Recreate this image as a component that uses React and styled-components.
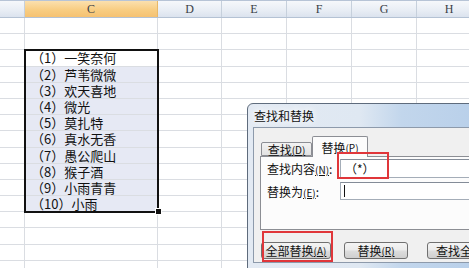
import React from "react";
import styled, { createGlobalStyle } from "styled-components";

const Global = createGlobalStyle`
  html, body { margin: 0; padding: 0; background: #fff; overflow: hidden; }
  body {
    font-family: "Noto Sans CJK SC", "Noto Sans", sans-serif;
  }
`;

const COLS = [
  { name: "", w: 25 },
  { name: "C", w: 133, active: true },
  { name: "D", w: 64 },
  { name: "E", w: 65 },
  { name: "F", w: 65 },
  { name: "G", w: 65 },
  { name: "H", w: 65 },
];

const ITEMS = [
  "（1）一笑奈何",
  "（2）芦苇微微",
  "（3）欢天喜地",
  "（4）微光",
  "（5）莫扎特",
  "（6）真水无香",
  "（7）愚公爬山",
  "（8）猴子酒",
  "（9）小雨青青",
  "（10）小雨",
];

const Sheet = styled.div`
  position: relative;
  width: 469px;
  height: 268px;
  overflow: hidden;
  background: #fff;
`;

const HeaderRow = styled.div`
  display: flex;
  height: 18px;
  box-sizing: border-box;
  border-top: 1px solid #b7c4d6;
  border-bottom: 1px solid #b4c2d4;
`;

const HeaderCell = styled.div`
  flex: 0 0 ${(p) => p.$w}px;
  box-sizing: border-box;
  border-right: 1px solid ${(p) => (p.$active ? "#e8b868" : "#c6d0dc")};
  background: ${(p) =>
    p.$active
      ? "linear-gradient(#fbe0ae, #f8cd82 55%, #f5c272)"
      : "linear-gradient(#f6f8fb, #e9eef5 55%, #dbe3ee)"};
  display: flex;
  align-items: center;
  justify-content: center;
  font-family: "Liberation Serif", "DejaVu Serif", serif;
  font-size: 12px;
  color: #3a3f47;
`;

const Row = styled.div`
  display: flex;
  height: 16.2px;
  box-sizing: border-box;
  border-bottom: 1px solid #dadde2;
`;

const Cell = styled.div`
  flex: 0 0 ${(p) => p.$w}px;
  box-sizing: border-box;
  border-right: 1px solid #dadde2;
  background: ${(p) => (p.$sel ? "#e6e9f4" : "#fff")};
  font-size: 13px;
  line-height: 15px;
  padding-left: 6px;
  color: #111;
  white-space: nowrap;
`;

const Selection = styled.div`
  position: absolute;
  left: 24px;
  top: 49px;
  width: 135px;
  height: 164px;
  box-sizing: border-box;
  border: 2px solid #111;
  pointer-events: none;
`;

const Handle = styled.div`
  position: absolute;
  left: 155px;
  top: 208px;
  width: 5px;
  height: 5px;
  background: #111;
  border: 1px solid #fff;
`;

/* Dialog */
const Dialog = styled.div`
  position: absolute;
  left: 247px;
  top: 103px;
  width: 250px;
  height: 175px;
  box-sizing: border-box;
  border: 1px solid #5e6b7c;
  border-radius: 6px 6px 0 0;
  background: linear-gradient(to right, #e3eaf3 0%, #dfe8f2 45%, #c2d6ec 62%, #b6cee9 100%);
  padding: 0 0 0 5px;
  display: flex;
  flex-direction: column;
`;

const TitleBar = styled.div`
  height: 23px;
  display: flex;
  align-items: center;
  padding-left: 1px;
  font-size: 12px;
  color: #111;
`;

const TitleText = styled.span`
  text-shadow: 0 0 6px #fff, 0 0 10px #fff;
`;

const Client = styled.div`
  position: relative;
  height: 136px;
  box-sizing: border-box;
  border: 1px solid #8d9aab;
  border-right: none;
  background: #f0f0f0;
  padding: 7px 0 0 6px;
  display: flex;
  flex-direction: column;
`;

const Tabs = styled.div`
  display: flex;
  align-items: flex-end;
  height: 21px;
  padding-left: 1px;
  position: relative;
  z-index: 1;
`;

const Tab = styled.div`
  box-sizing: border-box;
  width: ${(p) => p.$w}px;
  height: ${(p) => (p.$active ? 21 : 14)}px;
  margin-bottom: ${(p) => (p.$active ? -1 : 0)}px;
  border: 1px solid #8c8e94;
  border-bottom: ${(p) => (p.$active ? "none" : "1px solid #8c8e94")};
  border-left: ${(p) => (p.$first || p.$active ? "1px solid #8c8e94" : "none")};
  border-radius: 2px 2px 0 0;
  background: ${(p) => (p.$active ? "#fcfcfc" : "linear-gradient(#f3f3f3, #e2e2e2)")};
  display: flex;
  align-items: center;
  justify-content: center;
  font-size: 12px;
  color: #111;
  white-space: nowrap;
`;

const Key = styled.span`
  font-size: 10px;
  text-decoration: underline;
`;

const Panel = styled.div`
  box-sizing: border-box;
  height: 74px;
  width: 260px;
  border: 1px solid #8c8e94;
  background: #fcfcfc;
  padding: 2px 0 0 6px;
  display: grid;
  grid-template-columns: 73px 1fr;
  grid-template-rows: 19px 18px;
  row-gap: 4px;
  align-items: center;
`;

const Label = styled.div`
  font-size: 12px;
  color: #111;
  white-space: nowrap;
`;

const Input = styled.div`
  height: 100%;
  box-sizing: border-box;
  border: 1px solid #a4adb8;
  border-top-color: #848c98;
  background: #fff;
  font-size: 12px;
  line-height: 17px;
  padding-left: ${(p) => p.$pad || 0}px;
  color: #111;
  display: flex;
  align-items: center;
`;

const Caret = styled.span`
  display: inline-block;
  width: 1px;
  height: 12px;
  background: #111;
  margin-left: 3px;
`;

const Buttons = styled.div`
  display: flex;
  margin-top: 12px;
  padding-left: 1px;
`;

const Button = styled.div`
  box-sizing: border-box;
  flex: 0 0 ${(p) => p.$w}px;
  margin-right: ${(p) => p.$gap}px;
  height: 17px;
  border: 1px solid #707070;
  border-radius: 3px;
  background: linear-gradient(#f4f4f4, #ebebeb 48%, #dddddd 52%, #cfcfcf);
  display: flex;
  align-items: center;
  justify-content: ${(p) => (p.$clip ? "flex-start" : "center")};
  padding-left: ${(p) => (p.$clip ? 8 : 0)}px;
  font-size: 12px;
  color: #111;
  white-space: nowrap;
  overflow: hidden;
`;

const Mark = styled.div`
  position: absolute;
  left: ${(p) => p.$x}px;
  top: ${(p) => p.$y}px;
  width: ${(p) => p.$w}px;
  height: ${(p) => p.$h}px;
  box-sizing: border-box;
  border: 2px solid #e0363a;
  pointer-events: none;
  z-index: 3;
`;

export default function App() {
  const rows = Array.from({ length: 16 }, (_, i) => i);
  return (
    <>
      <Global />
      <Sheet>
        <HeaderRow>
          {COLS.map((c, i) => (
            <HeaderCell key={i} $w={c.w} $active={c.active}>
              {c.name}
            </HeaderCell>
          ))}
        </HeaderRow>
        {rows.map((r) => {
          const idx = r - 2;
          const inSel = idx >= 0 && idx < ITEMS.length;
          return (
            <Row key={r}>
              {COLS.map((c, ci) => (
                <Cell key={ci} $w={c.w} $sel={ci === 1 && inSel && idx > 0}>
                  {ci === 1 && inSel ? ITEMS[idx] : null}
                </Cell>
              ))}
            </Row>
          );
        })}
        <Selection />
        <Handle />

        <Dialog>
          <TitleBar>
            <TitleText>查找和替换</TitleText>
          </TitleBar>
          <Client>
            <Tabs>
              <Tab $w={51} $first>
                查找<Key>(D)</Key>
              </Tab>
              <Tab $w={56} $active>
                替换<Key>(P)</Key>
              </Tab>
            </Tabs>
            <Panel>
              <Label>
                查找内容<Key>(N)</Key>:
              </Label>
              <Input $pad={4}>（*）</Input>
              <Label>
                替换为<Key>(E)</Key>:
              </Label>
              <Input>
                <Caret />
              </Input>
            </Panel>
            <Buttons>
              <Button $w={70} $gap={13}>
                全部替换<Key>(A)</Key>
              </Button>
              <Button $w={64} $gap={19}>
                替换<Key>(R)</Key>
              </Button>
              <Button $w={70} $gap={0} $clip>
                查找全部<Key>(I)</Key>
              </Button>
            </Buttons>
          </Client>
          <Mark $x={89} $y={48} $w={52} $h={27} />
          <Mark $x={14} $y={127} $w={71} $h={31} />
        </Dialog>
      </Sheet>
    </>
  );
}
